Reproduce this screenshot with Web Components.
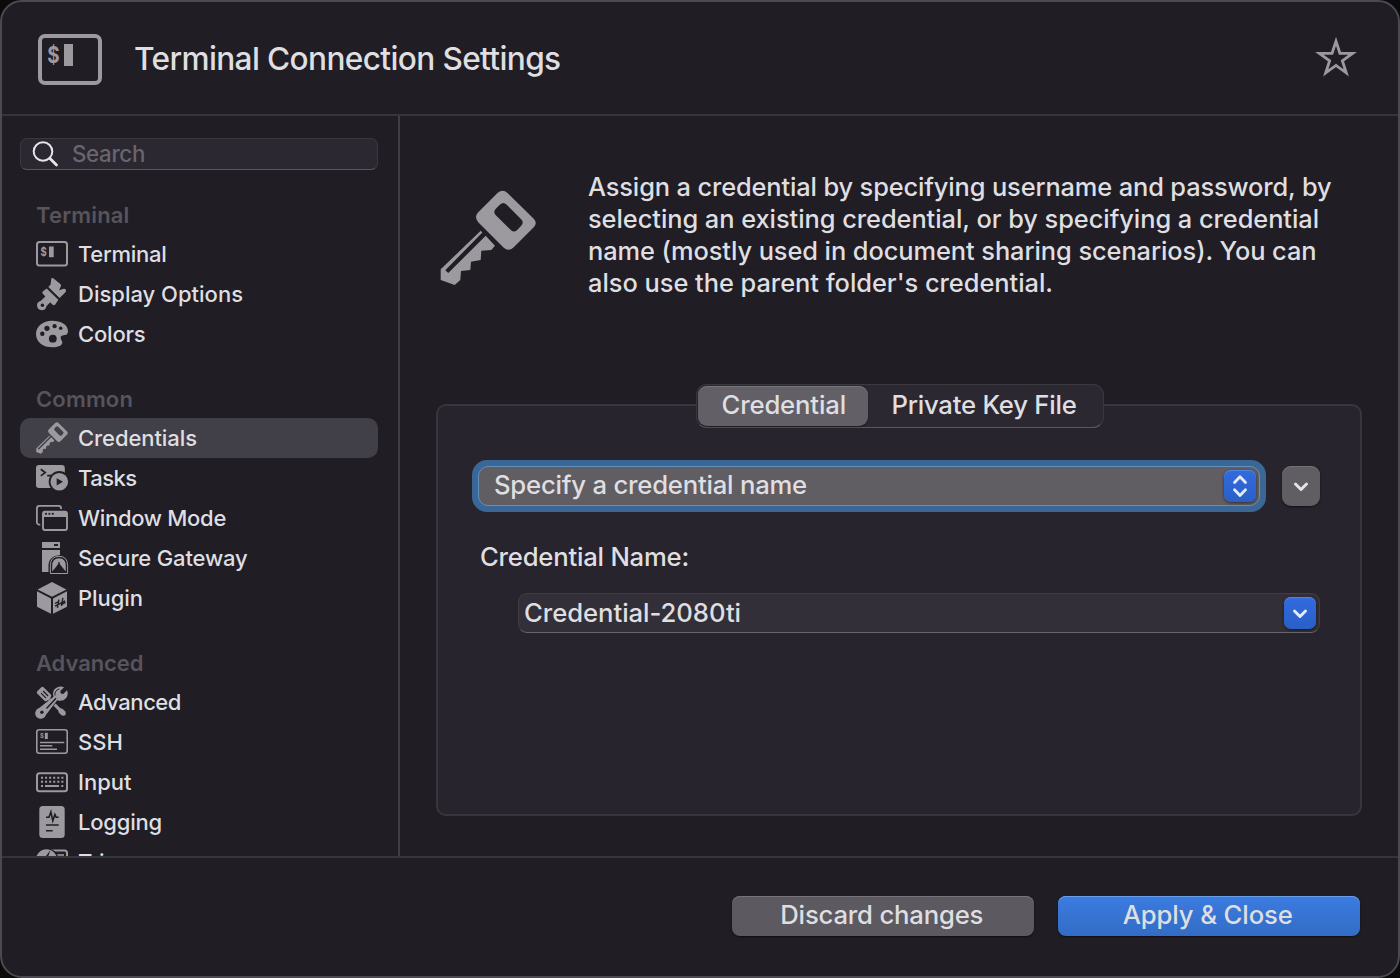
<!DOCTYPE html>
<html lang="en">
<head>
<meta charset="utf-8">
<title>Terminal Connection Settings</title>
<style>
html,body{margin:0;height:100%;background:#0b0b0c;overflow:hidden}
body{font-family:Inter,"Liberation Sans",sans-serif;font-weight:455;color:#dfdee0}
</style>
</head>
<body>
<settings-window>
  <window-header slot="header" label="Terminal Connection Settings" w="426.5"></window-header>
  <side-bar slot="sidebar">
    <side-group label="Terminal" w="93.5">
      <side-item icon="terminal" label="Terminal" w="88.5"></side-item>
      <side-item icon="brush" label="Display Options" w="165"></side-item>
      <side-item icon="palette" label="Colors" w="67.5"></side-item>
    </side-group>
    <side-group label="Common" w="97">
      <side-item icon="key" label="Credentials" w="119" selected></side-item>
      <side-item icon="tasks" label="Tasks" w="58.5"></side-item>
      <side-item icon="windows" label="Window Mode" w="148"></side-item>
      <side-item icon="gateway" label="Secure Gateway" w="169.5"></side-item>
      <side-item icon="plugin" label="Plugin" w="65"></side-item>
    </side-group>
    <side-group label="Advanced" w="107.5">
      <side-item icon="tools" label="Advanced" w="103"></side-item>
      <side-item icon="ssh" label="SSH" w="45"></side-item>
      <side-item icon="keyboard" label="Input" w="53.5"></side-item>
      <side-item icon="log" label="Logging" w="84"></side-item>
      <side-item icon="trigger" label="Triggers" w="84"></side-item>
    </side-group>
  </side-bar>
  <intro-block slot="main">
    <fit-text w="743.5">Assign a credential by specifying username and password, by</fit-text>
    <fit-text w="731">selecting an existing credential, or by specifying a credential</fit-text>
    <fit-text w="728.5">name (mostly used in document sharing scenarios). You can</fit-text>
    <fit-text w="465">also use the parent folder's credential.</fit-text>
  </intro-block>
  <tab-panel slot="main">
    <popup-select></popup-select>
    <fit-text w="209" style="margin:29px 0 0 42px;line-height:32px">Credential Name:</fit-text>
    <combo-field></combo-field>
  </tab-panel>
  <push-button slot="footer" w="203">Discard changes</push-button>
  <push-button slot="footer" primary w="170">Apply &amp; Close</push-button>
</settings-window>

<script>
const define = (name, markup, init) => {
  const tpl = document.createElement('template');
  customElements.define(name, class extends HTMLElement {
    connectedCallback() {
      if (this.shadowRoot) return;
      tpl.innerHTML = typeof markup === 'function' ? markup(this) : markup;
      this.attachShadow({mode: 'open'}).appendChild(tpl.content.cloneNode(true));
      if (init) init(this);
    }
  });
};

const G = '#9c999f';
const icons = {
  terminal: `<rect x="1" y="4" width="30" height="23.5" rx="2.5" fill="none" stroke="${G}" stroke-width="2"/><text transform="translate(4.6 17.9) scale(.84 1)" font-size="11.3" font-weight="700" fill="${G}">$</text><rect x="13" y="8.5" width="4.7" height="10.7" fill="${G}"/>`,
  brush: `<g fill="${G}"><path d="M15.3.6Q16.3-.5 17.6.5L24.6 6.3Q25.4 7.2 24.8 8.4L23 12.2 27.6 10.7Q29.3 10.4 30 12 30.2 13.6 29.2 14.6L23.6 20 12.3 9 14.6 6.6Z"/><path d="M10.7 10.4 22.3 21.7 19.3 26.4Q17.8 28 16.4 26.5L14.2 24.3 10.4 28.2A4.7 4.7 0 1 1 4.6 23L9.4 18.5 6.8 15.8Q5.6 14.2 7 13.2Z"/></g><circle cx="6.4" cy="27.2" r="1.7" fill="#201d25"/>`,
  palette: `<path fill="${G}" d="M16 2.8C7 2.8 0 8.4 0 16.2 0 24 7 29.3 16.5 29.3 22 29.3 26.3 27.8 26.3 24.6 26.3 22.6 24.7 22 24.7 19.8 24.7 17.5 27 17.4 29 17.1 31 16.8 32 15.4 32 13 31.5 6.5 25 2.8 16 2.8Z"/><g fill="#201d25"><circle cx="11" cy="10.3" r="2.6"/><circle cx="18.6" cy="8.2" r="2.1"/><circle cx="24.7" cy="10.3" r="1.8"/><circle cx="6.3" cy="15.7" r="2.2"/><circle cx="16.8" cy="20.7" r="3.9"/></g>`,
  key: `<g transform="scale(.33333)" fill="${G}"><path fill-rule="evenodd" d="M57.5 3Q62.7-1.5 67.5 3L94 29Q97.5 33 94 37L73.5 57.5Q68.5 62 63.5 57.5L38 32Q34 27 38 22.5ZM60 14.6 55.6 19Q53 22 55.6 25L71 40.2Q74 43 77 40.2L81.4 35.5Q84 32.5 81.4 29.5L66.5 14.6Q63.5 11.5 60 14.6Z"/><path d="M40.7 40.7 42.4 42.4 5.3 80.3 8.3 83 45.7 45.7 55 55.7 51.3 60 41.3 60.7 40.7 70 31 71.7 30.3 80 21 81 20.3 90 14.7 95 .7 90V79.3Z"/></g>`,
  tasks: `<rect y="3" width="28.8" height="23" rx="3" fill="${G}"/><g fill="none" stroke="#201d25" stroke-width="1.7"><path d="M4.8 7.3 9.2 10.6 4.8 13.9M11.2 13.6H17"/></g><circle cx="23.3" cy="19.7" r="10.6" fill="#201d25"/><circle cx="23.3" cy="19.7" r="8.8" fill="${G}"/><path fill="#201d25" d="M20.7 16.2 27 19.8 20.7 23.4Z"/>`,
  windows: `<rect x=".9" y="3.9" width="24.2" height="18.8" rx="2.5" fill="none" stroke="${G}" stroke-width="1.8"/><rect x="4.3" y="7" width="27.7" height="22" rx="3" fill="#201d25"/><rect x="7" y="9.6" width="24" height="18.4" rx="2" fill="none" stroke="${G}" stroke-width="1.9"/><path fill="${G}" d="M7 10H31V15H7Z"/><g fill="#201d25"><circle cx="10" cy="11.8" r="1.1"/><circle cx="13.4" cy="11.8" r="1.1"/><circle cx="16.8" cy="11.8" r="1.1"/></g>`,
  gateway: `<path fill="${G}" fill-rule="evenodd" d="M6 0H24V6H6ZM18 2V4H22V2ZM6 8H24V13Q12.5 14 12.5 24V30H6Z"/><path d="M14.4 31.5V23.5Q14.4 14.3 23 14.3T31.6 23.5V31.5Z" fill="#201d25" stroke="${G}" stroke-width="1"/><path fill="${G}" d="M16.2 29.5V24Q16.2 16.2 23 16.2T29.8 24V29.5L26.5 25.5 25.3 24 23.8 22V20.3H22.2V22L20.7 24 19.5 25.5Z"/>`,
  plugin: `<g fill="${G}"><path d="M16 0 30.4 7.4 16 14.8 1.6 7.4Z"/><path d="M1 9.3 15 16.5V31.8L1 24.7Z"/><path d="M17 16.5 31 9.3V24.7L17 31.8Z"/></g><path d="M19 24.2 29.2 18.8M18.9 21.5 23 19.4M25 22.8 29.5 20.4M22.9 17.6 21.4 25.8M26.9 15.8 25.4 24" stroke="#201d25" stroke-width="1.4" fill="none"/>`,
  tools: `<g transform="translate(1.5 1.5) rotate(45 14.5 14.5)"><path fill="${G}" d="M-2 10H8Q10.3 10 10.3 13H24.5L27 11.8H31L33 13.5V15.5L31 17.2H27L24.5 16H10.3Q10.3 19 8 19H-2Q-3.5 19-3.5 17V12Q-3.500 10-2 10Z"/><path d="M.5 13H7.5M.5 16H7.5" stroke="#201d25" stroke-width="1.2"/></g><path d="M8 24 21.5 10.7" stroke="#201d25" stroke-width="7"/><path d="M3.2 22 17.5 10.8Q15.5 4 21 1.4 24.5-.5 28 1.2L24.3 5 24.8 7.5 27.3 8 31 4.2Q33 8.5 30 12.2 26.5 16 21.2 14.3L10 28.8A5.5 5.5 0 1 1 3.2 22Z" fill="${G}"/><path d="M20 12.2 10.5 22.5" stroke="#201d25" stroke-width="1.4"/><path d="M23.5 3A5.3 5.3 0 0 0 19 9.500" fill="none" stroke="#201d25" stroke-width="1"/><circle cx="5.9" cy="26.2" r="1.7" fill="#201d25"/>`,
  ssh: `<rect x=".8" y="3.8" width="30.4" height="23.4" rx="2.5" fill="none" stroke="${G}" stroke-width="1.6"/><text transform="translate(3.9 12.4) scale(.85 1)" font-size="6.8" font-weight="700" fill="${G}">$</text><rect x="8.8" y="6.8" width="3" height="6.2" fill="${G}"/><path d="M4 16.4H28.3M4 19.8H16.3M4 23.3H21" stroke="${G}" stroke-width="1.5"/>`,
  keyboard: `<rect x="1" y="7.2" width="30" height="18" rx="2.5" fill="none" stroke="${G}" stroke-width="2"/><path d="M5 11.7H28M5 15.8H28" stroke="${G}" stroke-width="2.1" stroke-dasharray="2 2.08"/><path d="M5 20H7M9 20H23M25.3 20H27.3" stroke="${G}" stroke-width="2"/>`,
  log: `<rect x="3.3" width="25.4" height="32" rx="3.5" fill="${G}"/><path d="M10 11.3H13L14.9 6 16.8 14.7 18.9 8.5 20.2 11.3H22.7M10 19H22.7M10 24.7H16.7" fill="none" stroke="#201d25" stroke-width="1.6"/>`,
  trigger: `<rect x="12" y="4.4" width="19" height="22" rx="2.5" fill="none" stroke="${G}" stroke-width="2"/><path d="M20 9H28" stroke="${G}" stroke-width="1.6"/><circle cx="10.5" cy="14" r="12" fill="#201d25"/><circle cx="10.5" cy="14" r="10.7" fill="${G}"/><path fill="#201d25" d="M14.5 4 7 14H12L9 22 17 11H12Z"/>`
};
define('ui-icon', el => `<style>:host{display:block;width:32px;height:32px}svg{display:block;width:100%;height:100%;overflow:visible;font-family:Inter,sans-serif}</style><svg viewBox="0 0 32 32">${icons[el.getAttribute('name')]}</svg>`);

define('settings-window', `<style>
:host{display:grid;box-sizing:border-box;width:1400px;height:978px;grid-template:112px 2px 740px 2px minmax(0,1fr) / 396px 2px minmax(0,1fr);border:2px solid #4c4a50;border-radius:22px;background:#201d25;overflow:hidden}
.h{grid-area:1/1/2/4}.l1{grid-area:2/1/3/4;background:#37353c}.s{grid-area:3/1/4/2;overflow:hidden}.v{grid-area:3/2/4/3;background:#403e45}
main{grid-area:3/3/4/4;display:flex;flex-direction:column}.l2{grid-area:4/1/5/4;background:#37353c}
footer{grid-area:5/1/6/4;display:flex;justify-content:flex-end;gap:24px;padding:38px 38px 0 0}
</style><div class="h"><slot name="header"></slot></div><div class="l1"></div><div class="s"><slot name="sidebar"></slot></div><div class="v"></div><main><slot name="main"></slot></main><div class="l2"></div><footer><slot name="footer"></slot></footer>`);

define('window-header', el => `<style>
:host{display:flex;height:112px;align-items:center;padding:0 41px 0 36px;box-sizing:border-box;font-size:31.6px}
svg{display:block;overflow:visible;font-family:Inter,sans-serif}fit-text{margin-left:32px;flex:1;line-height:38px;margin-top:2px}
</style><svg width="64" height="51" viewBox="0 0 64 51" style="margin-top:3px"><rect x="2" y="2" width="60" height="47" rx="5" fill="none" stroke="${G}" stroke-width="4"/><text transform="translate(9.2 29) scale(.84 1)" font-size="22.500" font-weight="700" fill="${G}">$</text><rect x="26" y="10" width="9" height="22" fill="${G}"/></svg>
<fit-text w="${el.getAttribute('w')}">${el.getAttribute('label')}</fit-text>
<svg width="42" height="42" viewBox="-21 -21.7 42 42"><path d="M0-17.5 3.93-5.41 16.64-5.41 6.36 2.07 10.29 14.16 0 6.69-10.29 14.16-6.36 2.07-16.64-5.41-3.93-5.41Z" fill="none" stroke="${G}" stroke-width="2.8"/></svg>`);

define('side-bar', `<style>
:host{display:flex;flex-direction:column;padding:22px 20px 0 18px}
.search{display:flex;align-items:center;height:32px;box-sizing:border-box;border:1px solid #39373f;border-bottom-color:#59575d;border-radius:7px;background:#2b2832;padding-left:11px;color:#68656c;font-size:22.3px;margin-bottom:24px}
fit-text{margin:-1px 0 0 13px}
</style><div class="search"><svg width="27" height="27" viewBox="0 0 27 27" fill="none" stroke="#e6e5e7" stroke-linecap="round"><circle cx="11" cy="10.5" r="9.3" stroke-width="2"/><path d="M18 17.5 24.5 24" stroke-width="2.8"/></svg><fit-text w="73">Search</fit-text></div><slot></slot>`);

define('side-group', el => `<style>:host{display:block;margin-bottom:24px}.t{height:40px;line-height:42px;padding-left:16px;font-size:22px;font-weight:620;color:#57545b}</style><div class="t"><fit-text w="${el.getAttribute('w')}">${el.getAttribute('label')}</fit-text></div><slot></slot>`);

define('side-item', el => `<style>:host{display:flex;align-items:center;height:40px;padding-left:16px;gap:10px;border-radius:10px;font-size:22px;line-height:40px}:host([selected]){background:#413f47}</style><ui-icon name="${el.getAttribute('icon')}"></ui-icon><fit-text w="${el.getAttribute('w')}">${el.getAttribute('label')}</fit-text>`);

define('intro-block', `<style>:host{display:flex;height:268px;padding:0 0 0 40px;box-sizing:border-box}ui-icon{width:96px;height:96px;margin:74px 52px 0 0}.t{padding-top:55px;font-size:25.4px;line-height:32px}</style><ui-icon name="key"></ui-icon><div class="t"><slot></slot></div>`);

define('tab-panel', `<style>
:host{display:block;width:926px;margin-left:36px;font-size:25.7px}
.seg{position:relative;display:flex;width:408px;height:44px;margin:0 auto;transform:translateX(1px);box-sizing:border-box;border:1px solid #3b3940;border-bottom-color:#5a585e;border-radius:11px;background:#2b2831;padding:1px}
.tab{height:40px;line-height:37px;display:flex;justify-content:center;border-radius:9px}
.on{width:170px;background:#626066;box-shadow:inset 0 1px #77757b,0 1px 2px #0006}
.on fit-text{margin-left:1.5px}
.off{padding-left:23.5px}
.panel{box-sizing:border-box;height:412px;margin-top:-24px;border:2px solid #38363d;border-radius:10px;background:#27242d;padding-top:54px}
</style><div class="seg"><div class="tab on"><fit-text w="124.5">Credential</fit-text></div><div class="tab off"><fit-text w="185">Private Key File</fit-text></div></div><div class="panel"><slot></slot></div>`);

const blueBtn = 'width:32px;height:32px;box-sizing:border-box;border-radius:7px;background:linear-gradient(#326be0,#2a5fc6);box-shadow:inset 0 1px #5485e2,0 1px 3px #0008';
define('popup-select', `<style>
:host{display:flex;padding-left:34px;gap:16px;align-items:center;height:52px}
.ring{width:794px;height:52px;box-sizing:border-box;border-radius:15px;background:#3a6796;padding:6px}
.f{display:flex;height:40px;box-sizing:border-box;border:1px solid #6291bd;border-radius:10px;background:#605d63;padding:3px 3px 3px 15px;justify-content:space-between;line-height:29px}
.b{${blueBtn}}.g{width:38px;height:40px;border-radius:9px;background:#605d63;box-shadow:inset 0 1px #747177,0 1px 2px #0008}svg{display:block}
</style><div class="ring"><div class="f"><fit-text w="313">Specify a credential name</fit-text><div class="b"><svg width="32" height="32" fill="none" stroke="#e6eaf5" stroke-width="2.8" stroke-linecap="round" stroke-linejoin="round"><path d="M10.5 12.5 16 6.8 21.5 12.5M10.5 19.8 16 25.5 21.5 19.8"/></svg></div></div></div>
<div class="g"><svg width="38" height="40" fill="none" stroke="#e4e3e5" stroke-width="3" stroke-linecap="round" stroke-linejoin="round"><path d="M13.5 18 19 23.5 24.5 18"/></svg></div>`);

define('combo-field', `<style>
:host{display:flex;justify-content:space-between;box-sizing:border-box;width:802px;height:40px;margin:20px 0 0 80px;border:1px solid #403e45;border-bottom-color:#68666c;border-radius:9px;background:#322f39;padding:3px 3px 3px 5px;line-height:31px}
.b{${blueBtn}}svg{display:block}
</style><fit-text w="217">Credential-2080ti</fit-text><div class="b"><svg width="32" height="32" fill="none" stroke="#e6eaf5" stroke-width="3" stroke-linecap="round" stroke-linejoin="round"><path d="M10.5 14 16 19.5 21.5 14"/></svg></div>`);

define('push-button', el => `<style>
:host{display:flex;justify-content:center;width:302px;height:40px;line-height:37px;border-radius:8px;background:#5c5960;box-shadow:inset 0 1px #77757b,0 1px 2px #0008;font-size:25.7px}
:host([primary]){background:linear-gradient(#3b7ce0,#326cc6);box-shadow:inset 0 1px #6a9ee9,0 1px 2px #0008}
fit-text{margin-right:2.5px}
</style><fit-text w="${el.getAttribute('w')}">${el.textContent.replace('&', '&amp;')}</fit-text>`);

/* A single line whose tracking is adjusted to fill the advance width in "w".
   Registered last, so that every ancestor has its font size when it measures. */
define('fit-text', `<style>:host{display:block;white-space:nowrap}span{display:inline-block}</style><span><slot></slot></span>`, el => {
  const span = el.shadowRoot.querySelector('span');
  const natural = span.getBoundingClientRect().width;
  if (natural) span.style.letterSpacing = ((+el.getAttribute('w') - natural) / el.textContent.length).toFixed(3) + 'px';
});
</script>
</body>
</html>
